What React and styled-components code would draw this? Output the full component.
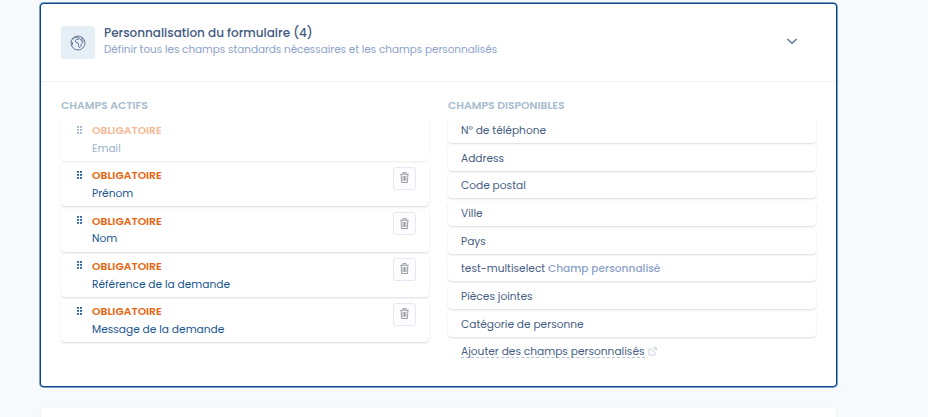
import React from "react";
import styled, { createGlobalStyle } from "styled-components";

const GlobalStyle = createGlobalStyle`
  * { box-sizing: border-box; }
  html, body { margin: 0; height: 100%; overflow: hidden; }
  body {
    background: #f6fafd;
    font-family: Poppins, Inter, "Open Sans", sans-serif;
    font-size: 10.63px;
    color: #465d83;
  }
`;

const Page = styled.main`
  width: 100%;
  height: 417px;
  padding: 4px 92px 0 41px;
  overflow: hidden;
`;

const Card = styled.section`
  width: 795px;
  height: 382px;
  background: #fff;
  border-radius: 3px;
  box-shadow: 0 0 0 1px #0a4788, 0 0 0 2px #7a9fc5;
`;

const NextCard = styled.section`
  width: 795px;
  height: 40px;
  margin-top: 22px;
  background: #fff;
  border-radius: 4px 4px 0 0;
  box-shadow: 0 1px 3px rgba(20, 50, 90, 0.08);
`;

const Header = styled.header`
  display: flex;
  align-items: flex-start;
  height: 78px;
  padding: 22px 38px 0 20px;
  border-bottom: 1px solid #f2f3f5;
`;

const IconTile = styled.div`
  display: flex;
  align-items: center;
  justify-content: center;
  width: 34px;
  height: 33px;
  padding-right: 1px;
  border-radius: 3px;
  background: #e6eef6;
  color: #566b8c;
`;

const Heading = styled.div`
  flex: 1;
  margin-left: 9px;
  white-space: nowrap;
`;

const Title = styled.h2`
  margin: -2px 0 0;
  font-size: 12px;
  line-height: 18px;
  font-weight: 500;
  color: #435a81;
`;

const Subtitle = styled.p`
  margin: 0;
  font-size: 10.4px;
  line-height: 16px;
  color: #8ca2c8;
`;

const Toggle = styled.button`
  display: flex;
  margin-top: 9px;
  padding: 0;
  border: 0;
  background: none;
  color: #60759d;
`;

const Columns = styled.div`
  display: grid;
  grid-template-columns: 368px 368px;
  column-gap: 19px;
  padding: 16px 20px 0;
`;

const ColumnTitle = styled.h3`
  margin: 0 0 5px;
  font-size: 10.8px;
  line-height: 15px;
  font-weight: 600;
  color: #a7bccd;
`;

const List = styled.ul`
  display: flex;
  flex-direction: column;
  gap: ${(p) => p.$gap};
  margin: 0;
  padding: 0;
  list-style: none;
`;

const rowShadow = "0 1px 2px rgba(40, 50, 70, 0.17)";

const ActiveRow = styled.li`
  display: flex;
  align-items: flex-start;
  height: 43px;
  padding: 5px 13px 0 16px;
  border-radius: 4px;
  background: #fff;
  box-shadow: ${rowShadow};
  opacity: ${(p) => (p.$locked ? 0.45 : 1)};
`;

const Grip = styled.svg`
  width: 6px;
  height: 8px;
  margin-top: 2.6px;
  fill: #2c64a0;
`;

const FieldText = styled.div`
  flex: 1;
  margin-left: 9px;
`;

const Required = styled.div`
  font-size: 10.8px;
  line-height: 16px;
  font-weight: 600;
  color: #e7650f;
`;

const FieldName = styled.div`
  margin-top: 1.8px;
  line-height: 16px;
  color: #18558f;
`;

const RemoveButton = styled.button`
  display: flex;
  align-items: center;
  justify-content: center;
  width: 23px;
  height: 23px;
  margin-top: -1.4px;
  padding: 0 1px 1px 0;
  border: 1px solid #e4e8f5;
  border-radius: 3px;
  background: #fdfdff;
  color: #82868d;
`;

const AvailableRow = styled.li`
  height: 25px;
  padding: 0 13px;
  border-radius: 4px;
  background: #fff;
  box-shadow: ${rowShadow};
  line-height: 26px;
  white-space: nowrap;
`;

const CustomTag = styled.span`
  font-weight: 500;
  color: #8ca2c8;
`;

const AddRow = styled.div`
  display: flex;
  align-items: center;
  gap: 3px;
  margin: 8px 0 0 13px;
`;

const AddLink = styled.a`
  height: 13px;
  line-height: 13px;
  border-bottom: 1px dashed #b3c4d8;
`;

const GlobeIcon = () => (
  <svg width="16" height="16" viewBox="0 0 16 16" fill="none" stroke="currentColor" strokeWidth="0.9">
    <circle cx="8" cy="8" r="7" />
    <path d="M2.3 4.2 4.8 2.5 8 2.2 9.3 3.4 8 4.4 6.2 4.5 5.3 6 6.2 7.6 8 7.8 8.5 9.1 8.3 10.8 9.5 12.7 11 11.2 11.2 9.4 12.7 7.3 11.5 6 10.7 4.2 9.3 3.4M12 2.4 11.8 4.2 13.3 6.1 14.8 6.2M1.2 6.8 2.4 7.3 2.5 9.1 1.8 10.6" />
  </svg>
);

const ChevronIcon = () => (
  <svg width="12" height="12" viewBox="0 0 12 12" fill="none" stroke="currentColor" strokeWidth="1.5">
    <path d="m1.3 4 4.7 4.2L10.7 4" />
  </svg>
);

const TrashIcon = () => (
  <svg width="9" height="11" viewBox="0 0 9 11" fill="none" stroke="currentColor" strokeWidth="0.8">
    <path d="M.3 2.3h8.4M2.9 2.1V.6h3.2v1.5M1.2 2.6l.3 7.9h6l.3-7.9M3.1 4v5M4.5 4v5M5.9 4v5" />
  </svg>
);

const ExternalIcon = () => (
  <svg width="9" height="9" viewBox="0 0 9 9" fill="none" stroke="#c8d4e0" strokeWidth="1">
    <path d="M4 2H1v6h6V5M5.4.7h2.9v2.9M8.2.8 3.7 5.3" />
  </svg>
);

const GripIcon = () => (
  <Grip viewBox="0 0 6 8">
    {[0, 3].map((x) =>
      [0, 3, 6].map((y) => <rect key={`${x}-${y}`} x={x} y={y} width="2" height="1.8" />)
    )}
  </Grip>
);

const activeFields = [
  { name: "Email", locked: true },
  { name: "Prénom" },
  { name: "Nom" },
  { name: "Référence de la demande" },
  { name: "Message de la demande" },
];

const availableFields = [
  { name: "N° de téléphone" },
  { name: "Address" },
  { name: "Code postal" },
  { name: "Ville" },
  { name: "Pays" },
  { name: "test-multiselect", custom: true },
  { name: "Pièces jointes" },
  { name: "Catégorie de personne" },
];

export default function App() {
  return (
    <>
      <GlobalStyle />
      <Page>
        <Card>
          <Header>
            <IconTile><GlobeIcon /></IconTile>
            <Heading>
              <Title>Personnalisation du formulaire (4)</Title>
              <Subtitle>Définir tous les champs standards nécessaires et les champs personnalisés</Subtitle>
            </Heading>
            <Toggle aria-label="Replier"><ChevronIcon /></Toggle>
          </Header>
          <Columns>
            <div>
              <ColumnTitle>CHAMPS ACTIFS</ColumnTitle>
              <List $gap="2.3px">
                {activeFields.map((f) => (
                  <ActiveRow key={f.name} $locked={f.locked}>
                    <GripIcon />
                    <FieldText>
                      <Required>OBLIGATOIRE</Required>
                      <FieldName>{f.name}</FieldName>
                    </FieldText>
                    {!f.locked && <RemoveButton aria-label="Supprimer"><TrashIcon /></RemoveButton>}
                  </ActiveRow>
                ))}
              </List>
            </div>
            <div>
              <ColumnTitle>CHAMPS DISPONIBLES</ColumnTitle>
              <List $gap="2.7px">
                {availableFields.map((f) => (
                  <AvailableRow key={f.name}>
                    {f.name}
                    {f.custom && <CustomTag> Champ personnalisé</CustomTag>}
                  </AvailableRow>
                ))}
              </List>
              <AddRow>
                <AddLink>Ajouter des champs personnalisés</AddLink>
                <ExternalIcon />
              </AddRow>
            </div>
          </Columns>
        </Card>
        <NextCard />
      </Page>
    </>
  );
}
